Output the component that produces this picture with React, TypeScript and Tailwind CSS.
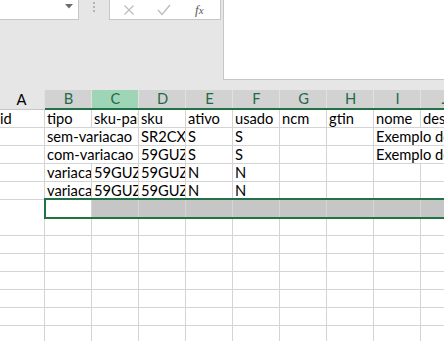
import React from "react";

const COLS = ["A", "B", "C", "D", "E", "F", "G", "H", "I", "J"];

type Cell = { t?: string; spill?: boolean };

const data: Cell[][] = [
  [{ t: "id" }, { t: "tipo" }, { t: "sku-pai" }, { t: "sku" }, { t: "ativo" }, { t: "usado" }, { t: "ncm" }, { t: "gtin" }, { t: "nome" }, { t: "descricao" }],
  [{}, { t: "sem-variacao", spill: true }, {}, { t: "SR2CXD0001" }, { t: "S" }, { t: "S" }, {}, {}, { t: "Exemplo de produto", spill: true }, {}],
  [{}, { t: "com-variacao", spill: true }, {}, { t: "59GUZ6A1B2" }, { t: "S" }, { t: "S" }, {}, {}, { t: "Exemplo de produto", spill: true }, {}],
  [{}, { t: "variacao" }, { t: "59GUZ6A1B2" }, { t: "59GUZ6A1B2-1" }, { t: "N" }, { t: "N" }, {}, {}, {}, {}],
  [{}, { t: "variacao" }, { t: "59GUZ6A1B2" }, { t: "59GUZ6A1B2-2" }, { t: "N" }, { t: "N" }, {}, {}, {}, {}],
];

const font = { fontFamily: "Lato, 'Open Sans', sans-serif" };

export default function App() {
  const rows: Cell[][] = [...data];
  while (rows.length < 13) rows.push(COLS.map(() => ({})));

  return (
    <div className="relative w-[444px] h-[341px] overflow-hidden bg-[#e6e6e6]" style={font}>
      {/* Top: name box + formula bar */}
      <div className="flex h-[80px]">
        <div className="relative w-[79px] h-[20px] bg-white border-r border-b border-[#c6c6c6]">
          <svg className="absolute left-[65px] top-[4px]" width="8" height="5" viewBox="0 0 8 5">
            <path d="M0 0 H8 L4 4.5 Z" fill="#6d6d6d" />
          </svg>
        </div>
        <div className="w-[30px] h-[20px] flex flex-col items-center pt-[2px] gap-[2px]">
          <div className="w-[2px] h-[2px] bg-[#b4b4b4]" />
          <div className="w-[2px] h-[2px] bg-[#b4b4b4]" />
          <div className="w-[2px] h-[2px] bg-[#b4b4b4]" />
        </div>
        <div className="w-[112px] h-[20px] bg-white border-l border-r border-b border-[#c6c6c6] flex items-center">
          <svg className="ml-[13px]" width="12" height="12" viewBox="0 0 12 12">
            <path d="M1.5 1.5 L10.5 10.5 M10.5 1.5 L1.5 10.5" stroke="#bdbdbd" strokeWidth="1.2" />
          </svg>
          <svg className="ml-[22px]" width="14" height="12" viewBox="0 0 14 12">
            <path d="M1 6 L5 10.5 L13 1" stroke="#bdbdbd" strokeWidth="1.4" fill="none" />
          </svg>
          <span
            className="ml-[24px] text-[13px] italic text-[#595959] leading-none"
            style={{ fontFamily: "'Liberation Serif', serif" }}
          >
            f<span className="text-[11px]">x</span>
          </span>
        </div>
        <div className="ml-[2px] flex-1 h-[80px] bg-white border-l border-b border-[#c6c6c6]" />
      </div>

      {/* Grid */}
      <div className="mt-[10px] ml-[-2px] w-[470px]">
        {/* header */}
        <div className="flex h-[20px]">
          {COLS.map((c) => {
            const isA = c === "A";
            const bg = c === "C" ? "bg-[#9fd5b7]" : isA ? "bg-[#e6e6e6]" : "bg-[#d2d2d2]";
            const border = isA ? "border-b border-[#c6c6c6]" : "border-b-2 border-[#217346]";
            return (
              <div
                key={c}
                className={`relative w-[47px] shrink-0 flex items-center justify-center text-[14.7px] ${bg} ${border} ${isA ? "text-black" : "text-[#1e6b47]"}`}
              >
                <span className="leading-none pb-[1px]">{c}</span>
                <div className="absolute right-0 top-0 bottom-0 w-px bg-[#e1e1e1]" />
              </div>
            );
          })}
        </div>
        {/* rows */}
        {rows.map((r, ri) => {
          const sel = ri === 5;
          return (
            <div key={ri} className="flex h-[18px] bg-white">
              {r.map((cell, ci) => {
                const next = r[ci + 1];
                const spillOver = cell.spill && next && !next.t;
                let bg = "bg-white";
                let line = "border-[#d4d4d4]";
                if (sel && ci >= 2) {
                  bg = "bg-[#c6c6c6]";
                  line = "border-[#ababab]";
                }
                return (
                  <div
                    key={ci}
                    className={`relative w-[47px] shrink-0 h-[18px] border-b border-[#d4d4d4] ${bg} ${spillOver ? "" : `border-r ${line}`} ${
                      spillOver ? "overflow-visible z-10" : "overflow-hidden"
                    }`}
                    style={{ borderBottomColor: sel ? "transparent" : undefined }}
                  >
                    {cell.t && (
                      <span className="absolute left-[2px] bottom-[0px] whitespace-nowrap text-[14.7px] leading-[18px] text-black">
                        {cell.t}
                      </span>
                    )}
                  </div>
                );
              })}
            </div>
          );
        })}
      </div>

      {/* selection outline */}
      <div className="absolute left-[44px] top-[198px] w-[420px] h-[21px] border-2 border-[#217346] pointer-events-none" />
    </div>
  );
}
